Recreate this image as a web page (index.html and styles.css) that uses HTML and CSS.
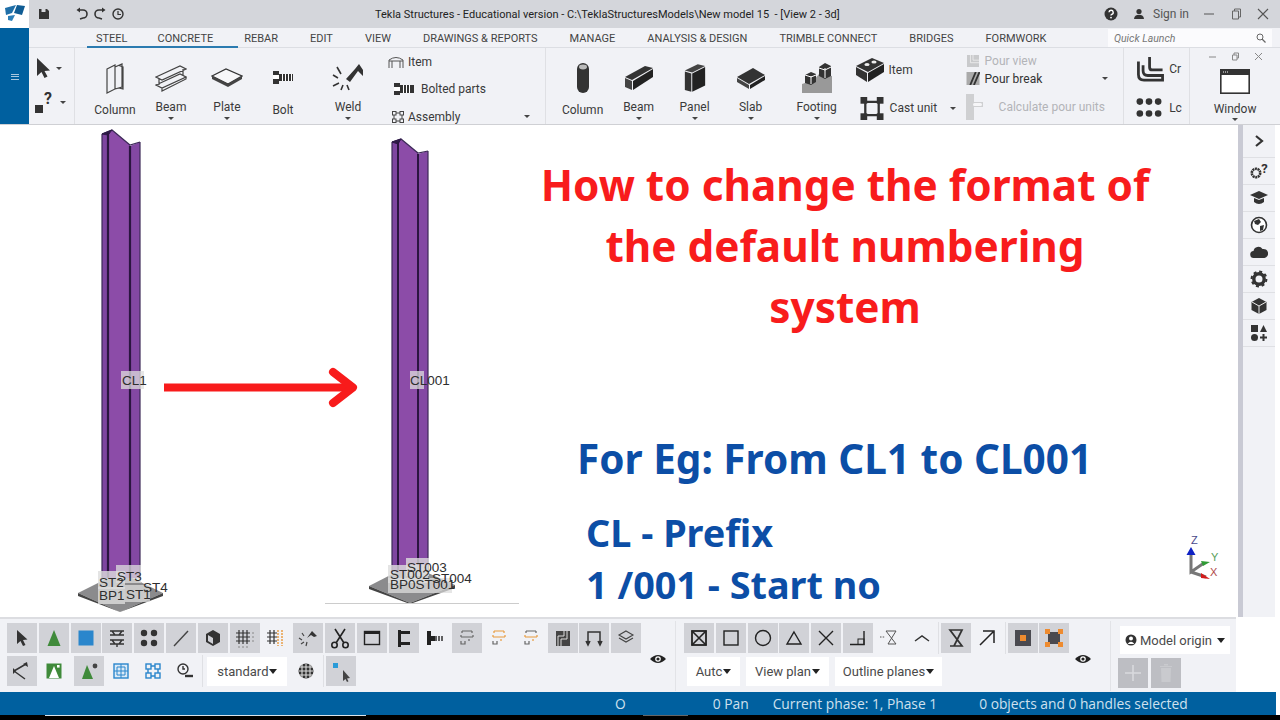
FILE: index.html
```html
<!DOCTYPE html>
<html lang="en">
<head>
<meta charset="utf-8">
<title>Tekla Structures</title>
<link rel="stylesheet" href="styles.css">
</head>
<body>
<div class="app">
  <header class="titlebar">
    <div class="logo"><svg width="29" height="28" viewBox="0 0 29 28"><path d="M5 8 L16 5 L12 13 L6 15Z" fill="#1f6fa8"/><path d="M17 5 L25 6 L22 15 L14 13Z" fill="#0f5c94"/><path d="M8 16 L15 15 L12 21 L8 20Z" fill="#2c7fb8"/></svg></div>
    <div class="quick">
      <svg width="12" height="12" viewBox="0 0 12 12" class="save"><path d="M1 1 H9 L11 3 V11 H1Z" fill="#333"/><rect x="3.5" y="1" width="4" height="3" fill="#d5d7dc"/></svg>
      <svg width="14" height="14" viewBox="0 0 14 14" class="undo"><path d="M3 3 H8 A4 4 0 0 1 8 11 L5 12" fill="none" stroke="#333" stroke-width="1.6"/><path d="M5 0.5 V5.5 L1.5 3Z" fill="#333"/></svg>
      <svg width="14" height="14" viewBox="0 0 14 14"><path d="M11 3 H6 A4 4 0 0 0 6 11 L9 12" fill="none" stroke="#333" stroke-width="1.6"/><path d="M9 0.5 V5.5 L12.5 3Z" fill="#333"/></svg>
      <svg width="14" height="14" viewBox="0 0 14 14"><circle cx="7" cy="7" r="5" fill="none" stroke="#333" stroke-width="1.4"/><path d="M7 4 V7.5 H10" fill="none" stroke="#333" stroke-width="1.2"/></svg>
    </div>
    <div class="doc-title">Tekla Structures - Educational version - C:\TeklaStructuresModels\New model 15&nbsp; - [View 2 - 3d]</div>
    <div class="win">
      <svg width="14" height="14" viewBox="0 0 14 14"><circle cx="7" cy="7" r="6.5" fill="#333"/><path d="M5 5.3 A2.1 2.1 0 1 1 7.6 7.4 Q7 7.7 7 8.6" fill="none" stroke="#fff" stroke-width="1.4"/><circle cx="7" cy="10.6" r="0.9" fill="#fff"/></svg>
      <span class="sign"><svg width="12" height="12" viewBox="0 0 12 12"><circle cx="6" cy="3.5" r="2.6" fill="#333"/><path d="M1 11 Q1.5 6.8 6 6.8 T11 11Z" fill="#333"/></svg>Sign in</span>
      <svg width="12" height="12" viewBox="0 0 12 12"><path d="M1 6 H11" stroke="#555" stroke-width="1"/></svg>
      <svg width="12" height="12" viewBox="0 0 12 12"><path d="M2.5 3 H8.5 V11 H2.5Z M4.5 3 V1 H10.5 V9 H8.5" fill="none" stroke="#666" stroke-width="1"/></svg>
      <svg width="12" height="12" viewBox="0 0 12 12"><path d="M1 1 L11 11 M11 1 L1 11" stroke="#555" stroke-width="1.1"/></svg>
    </div>
  </header>

  <div class="ribbon-wrap">
    <div class="rail"><span class="burger"></span></div>
    <div class="ribbon-main">
      <nav class="tabs">
        <div class="tabs-active"><span>STEEL</span><span>CONCRETE</span></div>
        <div class="tabs-rest"><span>REBAR</span><span>EDIT</span><span>VIEW</span><span>DRAWINGS &amp; REPORTS</span><span>MANAGE</span><span>ANALYSIS &amp; DESIGN</span><span>TRIMBLE CONNECT</span><span>BRIDGES</span><span>FORMWORK</span></div>
        <div class="search"><i>Quick Launch</i><svg width="10" height="10" viewBox="0 0 10 10"><circle cx="4" cy="4" r="3" fill="none" stroke="#666"/><path d="M6 6 L9.5 9.5" stroke="#666" stroke-width="1.2"/></svg></div>
      </nav>
      <div class="ribbon">
        <div class="picker">
          <div class="pick"><svg width="16" height="22" viewBox="0 0 16 22"><path d="M2 1 V19 L6.5 15 L9.5 21 L12.5 19.5 L9.5 14 L15 13.5Z" fill="#333"/></svg><b class="caret"></b></div>
          <div class="pick"><span class="sq"></span><span class="qmark">?</span><b class="caret"></b></div>
        </div>
        <div class="group g-steel">
          <div class="tool w56"><svg width="24" height="34" viewBox="0 0 24 34" fill="none" stroke="#444" stroke-width="1.2"><path d="M4 8 L12 4 V28 L4 32Z M12 6 L19 3 V26 L12 28 M16 4.5 L20 6 V28 L16 27"/></svg><span>Column</span></div>
          <div class="tool w56 drop"><svg width="32" height="30" viewBox="0 0 32 30" fill="none" stroke="#444" stroke-width="1.2"><path d="M1 14 L25 3 L31 6 L7 17Z M4 16 V22 M28 6 V12 M1 22 L25 11 L31 14 L7 25 Z M7 25 V28 L31 16 V14"/></svg><span>Beam</span><b class="caret"></b></div>
          <div class="tool w56 drop"><svg width="32" height="30" viewBox="0 0 32 30"><path d="M1 13 L15 6 L31 13 L17 21Z" fill="#f7f7f9" stroke="#333" stroke-width="1.3"/><path d="M1 13 V16 L17 24 L31 16 V13 L17 21Z" fill="#444"/></svg><span>Plate</span><b class="caret"></b></div>
          <div class="tool w56"><svg width="20" height="34" viewBox="0 0 20 34"><rect x="0" y="10" width="6" height="13" fill="#333"/><rect x="0" y="14" width="6" height="4" fill="#fff"/><path d="M6 13 H20 V20 H6Z" fill="#333"/><path d="M9.5 13 V20 M12.5 13 V20 M15.5 13 V20 M18.5 13 V20" stroke="#fff"/></svg><span>Bolt</span></div>
          <div class="tool w74 drop"><svg width="32" height="32" viewBox="0 0 32 32"><path d="M14 17 L23 7 L27 2 L31 8 V14 L26 9 L18 20Z" fill="#333"/><path d="M1 13 L6 16 M5 5 L9 12 M1 24 L7 21 M9 28 L11 23 M17 28 L15 23" stroke="#333" stroke-width="1.6"/></svg><span>Weld</span><b class="caret"></b></div>
          <div class="stack st-steel">
            <div class="line"><svg width="16" height="14" viewBox="0 0 16 14" fill="none" stroke="#555"><path d="M1 13 V5 Q8 0 15 5 V13 M1 6 H15 M4 6 V13 M12 6 V13"/></svg><span>Item</span></div>
            <div class="line in8"><svg width="20" height="12" viewBox="0 0 20 12"><rect width="6" height="12" fill="#333"/><rect y="4" width="6" height="4" fill="#fff"/><path d="M6 2 H20 V10 H6Z" fill="#333"/><path d="M9.5 2 V10 M12.5 2 V10 M15.5 2 V10" stroke="#fff"/></svg><span>Bolted parts</span></div>
            <div class="line in4"><svg width="12" height="12" viewBox="0 0 12 12" fill="none" stroke="#444"><rect x="0.5" y="0.5" width="3.5" height="3.5"/><rect x="8" y="0.5" width="3.5" height="3.5"/><rect x="0.5" y="8" width="3.5" height="3.5"/><rect x="8" y="8" width="3.5" height="3.5"/><path d="M4 2 H8 M4 10 H8 M2 4 V8 M10 4 V8"/></svg><span>Assembly</span><b class="caret end"></b></div>
          </div>
        </div>
        <div class="group g-concrete">
          <div class="tool w56"><svg width="14" height="32" viewBox="0 0 14 32"><rect x="1" y="1" width="12" height="30" rx="6" fill="#333"/><ellipse cx="7" cy="5" rx="4" ry="2.4" fill="#bbb"/></svg><span>Column</span></div>
          <div class="tool w56 drop"><svg width="32" height="28" viewBox="0 0 32 28"><path d="M2 13 L22 2 L30 4 L9 16Z" fill="#333"/><path d="M2 14 L9 17 V26 L2 23Z" fill="#444"/><path d="M10 17 L30 5 V13 L10 26Z" fill="#222"/></svg><span>Beam</span><b class="caret"></b></div>
          <div class="tool w56 drop"><svg width="24" height="32" viewBox="0 0 26 32"><path d="M2 8 L16 1 L24 3 L10 10Z" fill="#444"/><path d="M2 9 L9 11 V31 L2 29Z" fill="#333"/><path d="M10 11 L24 4 V24 L10 31Z" fill="#222"/></svg><span>Panel</span><b class="caret"></b></div>
          <div class="tool w56 drop"><svg width="32" height="28" viewBox="0 0 32 28"><path d="M2 13 L18 4 L30 11 L14 20Z" fill="#333"/><path d="M2 14 L14 21 V25 L2 18Z" fill="#444"/><path d="M15 21 L30 12 V16 L15 25Z" fill="#222"/></svg><span>Slab</span><b class="caret"></b></div>
          <div class="tool w76 drop"><svg width="32" height="32" viewBox="0 0 32 32"><path d="M1 22 L13 18 L18 12 L31 14 V31 H1Z" fill="#999"/><path d="M4 13 L10 10 L15 12 V20 L10 23 L4 21Z" fill="#333"/><path d="M18 5 L24 1 L30 4 V14 L24 17 L18 14Z" fill="#333"/><path d="M10 14 V22 M24 6 V16 M4 13 L10 15 L15 13 M18 6 L24 8 L30 5" stroke="#fff" fill="none"/></svg><span>Footing</span><b class="caret"></b></div>
          <div class="stack st-cast">
            <div class="line big"><svg width="30" height="26" viewBox="0 0 30 26"><path d="M1 9 L17 1 L29 6 L13 15Z" fill="#333"/><path d="M1 10 L12 16 V25 L1 18Z" fill="#333"/><path d="M13 16 L29 7 V15 L13 25Z" fill="#222"/><ellipse cx="12" cy="7.5" rx="2.6" ry="1.6" fill="#eee"/><ellipse cx="19" cy="5" rx="2.6" ry="1.6" fill="#eee"/></svg><span>Item</span></div>
            <div class="line big cast"><svg width="24" height="23" viewBox="0 0 24 24"><path d="M5 5 H19 V19 H5Z" fill="none" stroke="#333" stroke-width="2.4"/><rect x="0" y="0" width="7" height="7" fill="#333"/><rect x="17" y="0" width="7" height="7" fill="#333"/><rect x="0" y="17" width="7" height="7" fill="#333"/><rect x="17" y="17" width="7" height="7" fill="#333"/></svg><span>Cast unit</span><b class="caret"></b></div>
          </div>
          <div class="stack st-pour">
            <div class="line off"><svg width="14" height="12" viewBox="0 0 14 14"><rect width="14" height="14" fill="#c9cacc"/><path d="M7 0 V6 H14 M4 0 V9 H14" fill="none" stroke="#eee"/></svg><span>Pour view</span></div>
            <div class="line"><svg width="14" height="13" viewBox="0 0 14 14"><rect width="14" height="14" fill="#aaa"/><path d="M4 14 L10 0 M8 14 L14 0" stroke="#333" stroke-width="2"/></svg><span class="pour">Pour break</span><b class="caret end"></b></div>
            <div class="line off big2"><svg width="27" height="26" viewBox="0 0 27 26"><path d="M0 0 H8 V26 H0Z" fill="#cfd0d2"/><path d="M8 8 H17 V13 H8Z" fill="#cfd0d2"/><rect x="7" y="9" width="9" height="3" rx="1.5" fill="#f6f6f8"/></svg><span>Calculate pour units</span></div>
          </div>
        </div>
        <div class="group g-small">
          <div class="mini"><svg width="31" height="26" viewBox="0 0 30 28" fill="none" stroke="#333" stroke-width="3"><path d="M2 6 V20 Q2 26 8 26 H28 V21 H12 Q7 21 7 16 V10"/><path d="M14 1 V12 Q14 15 17 15 H28"/></svg><span>Cr</span></div>
          <div class="mini"><svg width="28" height="22" viewBox="0 0 28 24" fill="#333"><circle cx="4" cy="5" r="3.6"/><circle cx="14" cy="5" r="3.6"/><circle cx="24" cy="5" r="3.6"/><circle cx="4" cy="18" r="3.6"/><circle cx="14" cy="18" r="3.6"/><circle cx="24" cy="18" r="3.6"/></svg><span class="lc">Lc</span></div>
        </div>
        <div class="group g-window">
          <div class="win-mini"><svg width="9" height="9" viewBox="0 0 9 9"><path d="M1 5 H8" stroke="#888"/></svg><svg width="9" height="9" viewBox="0 0 9 9" fill="none" stroke="#888"><path d="M1.5 3 H6 V8 H1.5Z M3 3 V1 H7.5 V6 H6"/></svg><svg width="9" height="9" viewBox="0 0 9 9"><path d="M1 1 L8 8 M8 1 L1 8" stroke="#888"/></svg></div>
          <svg class="w-icon" width="30" height="25" viewBox="0 0 30 25"><rect x="0.8" y="0.8" width="28.4" height="23.4" fill="#fff" stroke="#333" stroke-width="1.6"/><rect x="0" y="0" width="30" height="6" fill="#333"/><path d="M3 3 H9" stroke="#fff" stroke-dasharray="1 1"/></svg>
          <span>Window</span><b class="caret"></b>
        </div>
      </div>
    </div>
  </div>

  <main class="workspace">
    <div class="canvas">
      <svg class="models" width="540" height="492" viewBox="0 125 540 492">
        <path d="M78 593 L120 572 L163 593 L120 612Z" fill="#8b8b8d"/>
        <path d="M78 593 L120 612 L163 593 V596 L120 612 L78 596Z" fill="#444"/>
        <path d="M102 134 L108 133 V578 H102Z" fill="#7e45a0"/>
        <path d="M108 134 L112 130 L130 145 V578 H108Z" fill="#8c4ca8"/>
        <path d="M130 146 L140 142 V578 H130Z" fill="#8348a3"/>
        <path d="M102 134 L112 130 L130 145 L140 142 M102 134 V578 M140 142 V578" fill="none" stroke="#3d2a58" stroke-width="1.2"/>
        <path d="M102 134 L112 130 L108 135Z" fill="#2e1a47" stroke="#2e1a47"/>
        <path d="M108 133 V578 M130 146 V578" stroke="#2b1540" stroke-width="2.2"/>
        <path d="M369 586 L410 565 L455 585 L410 603Z" fill="#8b8b8d"/>
        <path d="M369 586 L410 603 L455 585 V588 L410 604 L369 589Z" fill="#444"/>
        <path d="M392 142 L398 141 V572 H392Z" fill="#7e45a0"/>
        <path d="M398 143 L401 139 L418 153 V572 H398Z" fill="#8c4ca8"/>
        <path d="M418 154 L428 151 V572 H418Z" fill="#8348a3"/>
        <path d="M392 142 L401 139 L418 153 L428 151 M392 142 V572 M428 151 V572" fill="none" stroke="#3d2a58" stroke-width="1.2"/>
        <path d="M392 142 L401 139 L398 144Z" fill="#2e1a47" stroke="#2e1a47"/>
        <path d="M398 142 V572 M418 154 V572" stroke="#2b1540" stroke-width="2"/>
        <path d="M325 603.5 H519" stroke="#ccc"/>
        <rect x="121" y="371" width="23" height="18" fill="#ddd" opacity=".75"/>
        <text x="122" y="385" class="lbl">CL1</text>
        <rect x="410" y="371" width="14" height="18" fill="#ddd" opacity=".75"/>
        <text x="410" y="385" class="lbl">CL001</text>
        <rect x="116" y="565" width="25" height="18" fill="#ddd" opacity=".75"/>
        <rect x="98" y="571" width="27" height="18" fill="#ddd" opacity=".8"/>
        <rect x="98" y="587" width="27" height="17" fill="#ddd" opacity=".8"/>
        <rect x="125" y="585" width="25" height="17" fill="#ddd" opacity=".75"/>
        <text x="117" y="581" class="lbl">ST3</text>
        <text x="99" y="587" class="lbl">ST2</text>
        <text x="143" y="592" class="lbl">ST4</text>
        <text x="99" y="600" class="lbl">BP1</text>
        <text x="126" y="599" class="lbl">ST1</text>
        <rect x="406" y="558" width="23" height="18" fill="#ddd" opacity=".8"/>
        <rect x="388" y="565" width="40" height="18" fill="#ddd" opacity=".8"/>
        <rect x="388" y="578" width="64" height="15" fill="#ddd" opacity=".75"/>
        <text x="407" y="572" class="lbl">ST003</text>
        <text x="390" y="579" class="lbl">ST002</text>
        <text x="432" y="583" class="lbl">ST004</text>
        <text x="390" y="589" class="lbl">BP0ST001</text>
        <path d="M164 387.5 H350" stroke="#f81b1b" stroke-width="8"/>
        <path d="M333 372 L353 387.5 L333 403" fill="none" stroke="#f81b1b" stroke-width="8" stroke-linecap="round" stroke-linejoin="round"/>
      </svg>
      <section class="notes">
        <h1>How to change the format of<br>the default numbering<br>system</h1>
        <h2>For Eg: From CL1 to CL001</h2>
        <p>CL - Prefix</p>
        <p>1 /001 - Start no</p>
      </section>
      <svg class="gizmo" width="40" height="56" viewBox="0 0 40 56"><path d="M9 23 V42 L22 33 M9 42 L24 47" fill="none" stroke="#777" stroke-width="3"/><path d="M9 17 L13.5 25 H4.5Z" fill="#0f22c4"/><path d="M19 31 L28 32 L21 36Z" fill="#2f9b34"/><path d="M19 43 L28 49 L19 48Z" fill="#d31b1b"/><text x="9" y="14" class="az">Z</text><text x="29" y="31" class="ay">Y</text><text x="28" y="46" class="ax">X</text></svg>
    </div>
    <div class="strip"></div>
    <aside class="side">
      <div class="s-row first"><svg width="12" height="14" viewBox="0 0 12 14"><path d="M3 2 L9 7 L3 12" fill="none" stroke="#333" stroke-width="2.2"/></svg></div>
      <div class="s-row"><svg width="12" height="12" viewBox="0 0 12 12" class="gear"><circle cx="6" cy="6" r="4.2" fill="none" stroke="#333" stroke-width="2.6" stroke-dasharray="2 .6"/></svg><span class="s-q">?</span></div>
      <div class="s-row"><svg width="18" height="14" viewBox="0 0 18 14"><path d="M0 4 L9 0 L18 4 L9 8Z" fill="#333"/><path d="M4 7 L9 9 L14 7 V11 Q9 15 4 11Z" fill="#333"/></svg></div>
      <div class="s-row"><svg width="18" height="18" viewBox="0 0 18 18"><circle cx="9" cy="9" r="7.5" fill="#fff" stroke="#333" stroke-width="1.6"/><path d="M4 5 L9 3 L11 6 L8 9 L5 8Z M10 10 L14 9 L13 14 L10 15Z" fill="#333"/></svg></div>
      <div class="s-row"><svg width="18" height="14" viewBox="0 0 18 14"><path d="M4 13 A3.5 3.5 0 0 1 3.5 6 A5 5 0 0 1 12.5 4 A4.5 4.5 0 0 1 14.5 13Z" fill="#333"/></svg></div>
      <div class="s-row"><svg width="18" height="18" viewBox="0 0 18 18"><circle cx="9" cy="9" r="5.2" fill="none" stroke="#333" stroke-width="3.4"/><circle cx="9" cy="9" r="7.4" fill="none" stroke="#333" stroke-width="2" stroke-dasharray="3 2.8"/></svg></div>
      <div class="s-row"><svg width="18" height="18" viewBox="0 0 18 18"><path d="M9 1 L16.5 5 V13 L9 17 L1.5 13 V5Z" fill="#333"/><path d="M2 5 L9 9 L16 5 M9 9 V17" fill="none" stroke="#eee"/></svg></div>
      <div class="s-row"><svg width="18" height="18" viewBox="0 0 18 18" fill="#333"><rect x="1" y="1" width="7" height="7"/><path d="M13.5 1 L17 8 H10Z"/><circle cx="4.5" cy="13.5" r="3.5"/><path d="M12.5 10 H14.5 V12.5 H17 V14.5 H14.5 V17 H12.5 V14.5 H10 V12.5 H12.5Z"/></svg></div>
    </aside>
    <div class="edge"></div>
  </main>

  <div class="toolbar">
    <div class="tb-sec sec-a">
      <div class="tb-row">
        <button class="b g"><svg viewBox="0 0 30 30"><path d="M10 7 V21 L13.5 18 L16 23 L18.5 22 L16 17 L20.5 16.5Z" fill="#333"/></svg></button>
        <button class="b g"><svg viewBox="0 0 30 30"><path d="M15 7 L21.5 23 H8.5Z" fill="#3f8a3a"/></svg></button>
        <button class="b g"><svg viewBox="0 0 30 30"><rect x="7.5" y="7.5" width="15" height="15" fill="#2a86cc"/></svg></button>
        <button class="b g"><svg viewBox="0 0 30 30"><path d="M8 8 H22 M10 8 L13 12 M20 8 L17 12 M8 12 H22 M8 17 H22 M10 17 L13 21 M20 17 L17 21 M8 21 H22 M15 21 V24" stroke="#333" stroke-width="1.4" fill="none"/></svg></button>
        <button class="b g"><svg viewBox="0 0 30 30" fill="#333"><circle cx="10" cy="10" r="3.2"/><circle cx="20" cy="10" r="3.2"/><circle cx="10" cy="20" r="3.2"/><circle cx="20" cy="20" r="3.2"/></svg></button>
        <button class="b g"><svg viewBox="0 0 30 30"><path d="M8 23 L22 8" stroke="#444" stroke-width="1.4"/></svg></button>
        <button class="b g"><svg viewBox="0 0 30 30"><path d="M15 7 L22 11 V19 L15 23 L8 19 V11Z" fill="#333"/><path d="M10 12 L15 15 V21 L10 18Z M15 15 L20 12" fill="#d0d1d6"/></svg></button>
        <button class="b g"><svg viewBox="0 0 30 30"><path d="M9 7 V21 M13 7 V21 M17 7 V21 M6 10 H20 M6 14 H20 M6 18 H20" stroke="#333" stroke-width="1.2"/><path d="M9 23 V25 M13 23 V25 M17 23 V25 M22 10 H24 M22 14 H24 M22 18 H24" stroke="#888"/></svg></button>
        <button class="b"><svg viewBox="0 0 30 30"><path d="M9 7 V21 M13 7 V21 M6 10 H16 M6 14 H16 M6 18 H16" stroke="#333" stroke-width="1.2"/><path d="M17 7 V23 M21 7 V23" stroke="#e89a3c" stroke-width="1.4" stroke-dasharray="2 1"/></svg></button>
        <button class="b g"><svg viewBox="0 0 30 30"><path d="M14 15 L19 8 L24 13 L21 14 L18 12Z" fill="#333"/><path d="M6 15 L9 17 M9 10 L11 13 M8 21 L11 19 M13 23 L14 19" stroke="#444" stroke-width="1.2"/></svg></button>
        <button class="b g"><svg viewBox="0 0 30 30" fill="none" stroke="#222" stroke-width="1.6"><path d="M10 6 L19 20 M20 6 L11 20"/><circle cx="9.5" cy="22" r="2.7"/><circle cx="20.5" cy="22" r="2.7"/></svg></button>
        <button class="b g"><svg viewBox="0 0 30 30"><rect x="7.5" y="8.5" width="15" height="13" fill="none" stroke="#222" stroke-width="1.4"/><rect x="7.5" y="8" width="15" height="3" fill="#222"/></svg></button>
        <button class="b g"><svg viewBox="0 0 30 30" fill="#222"><rect x="9" y="7" width="3" height="17"/><rect x="9" y="8" width="12" height="3"/><rect x="9" y="19" width="12" height="3"/></svg></button>
        <button class="b"><svg viewBox="0 0 30 30"><rect x="7" y="8" width="4" height="14" fill="#222"/><rect x="11" y="13" width="4" height="5" fill="#222"/><path d="M16 13 V18 M19 13 V18 M22 13 V18" stroke="#222" stroke-width="1.4"/></svg></button>
        <button class="b g"><svg viewBox="0 0 30 30" fill="none" stroke="#666" stroke-width="1.2"><path d="M10 8 H20 M10 8 V10 M20 8 V10 M9 14 H21 M9 14 V12 M21 14 V12 M9 18 V21 H13 V18 M17 16 V18"/></svg></button>
        <button class="b"><svg viewBox="0 0 30 30" fill="none" stroke="#e89a3c" stroke-width="1.2"><path d="M10 8 H20 M10 8 V10 M20 8 V10 M9 14 H21 M9 14 V12 M21 14 V12 M17 16 V18"/><path d="M9 18 V21 H13 V18" stroke="#666"/></svg></button>
        <button class="b"><svg viewBox="0 0 30 30" fill="none" stroke="#666" stroke-width="1.2"><path d="M10 8 H20 M10 8 V10 M20 8 V10"/><path d="M9 14 H21 M9 14 V12 M21 14 V12 M17 16 V18" stroke="#e89a3c"/><path d="M9 18 V21 H13 V18"/></svg></button>
        <button class="b g"><svg viewBox="0 0 30 30"><rect x="8" y="8" width="14" height="15" fill="#444"/><path d="M19 8 V16 H13 V23 M16 8 V13 H10 V23" fill="none" stroke="#ddd" stroke-width="1"/></svg></button>
        <button class="b g"><svg viewBox="0 0 30 30" fill="none" stroke="#333" stroke-width="1.5"><path d="M9 21 V9 H21 V21"/><path d="M7 18 L9 22 L11 18 M19 18 L21 22 L23 18" fill="#333"/></svg></button>
        <button class="b g"><svg viewBox="0 0 30 30" fill="none" stroke="#444" stroke-width="1.1"><path d="M15 8 L22 12 L15 16 L8 12Z"/><path d="M8 15 L15 19 L22 15"/></svg></button>
      </div>
      <div class="tb-row">
        <button class="b g"><svg viewBox="0 0 30 30"><path d="M7 15 L19 8 M7 15 L18 23" stroke="#333" stroke-width="1.5" fill="none"/><path d="M16 8 L20 6 L21 11Z M6 12 L9 15 L6 18" fill="#333"/></svg></button>
        <button class="b"><svg viewBox="0 0 30 30"><rect x="7.5" y="7.5" width="15" height="15" fill="#3f8a3a"/><path d="M15 10 L20 22 H10Z" fill="#fff"/><rect x="18" y="9" width="2.6" height="2.6" fill="#fff"/></svg></button>
        <span class="sp4"></span>
        <button class="b g"><svg viewBox="0 0 30 30"><path d="M13 9 L19 23 H8Z" fill="#3f8a3a"/><circle cx="21" cy="10" r="2.4" fill="#444"/></svg></button>
        <button class="b"><svg viewBox="0 0 30 30"><rect x="8" y="8" width="14" height="14" fill="#dbeaf7" stroke="#2a86cc" stroke-width="1.4"/><path d="M8 15 H22 M15 8 V22 M11 11 H19 V19 H11Z" fill="none" stroke="#2a86cc"/></svg></button>
        <button class="b"><svg viewBox="0 0 30 30" fill="none" stroke="#2a86cc" stroke-width="1.4"><rect x="8" y="8" width="5" height="5"/><rect x="17" y="8" width="5" height="5"/><rect x="8" y="17" width="5" height="5"/><rect x="17" y="17" width="5" height="5"/><path d="M13 10 H17 M13 20 H17 M10 13 V17 M20 13 V17"/></svg></button>
        <button class="b"><svg viewBox="0 0 30 30" fill="none" stroke="#333" stroke-width="1.4"><circle cx="13" cy="13" r="5"/><path d="M13 10 V13 H15"/><path d="M15 20 H23" stroke-width="2.4"/></svg></button>
        <span class="vsep"></span>
        <div class="sel std"><span>standard</span><b class="tri"></b></div>
        <button class="b pat"><svg viewBox="0 0 30 30"><circle cx="15" cy="15" r="7.5" fill="#333"/><path d="M8 11 H22 M8 15 H22 M8 19 H22 M11 8 V22 M15 8 V22 M19 8 V22" stroke="#ddd" stroke-width="1.1"/></svg></button>
        <span class="vsep"></span>
        <button class="b g"><svg viewBox="0 0 30 30"><rect x="7" y="7" width="5" height="5" fill="#2a9bd8"/><path d="M17 14 V25 L19.5 23 L21 26 L22.5 25.3 L21 22.5 L24 22Z" fill="#444"/></svg></button>
      </div>
      <svg class="eye" width="16" height="10" viewBox="0 0 16 10"><path d="M0 5 Q8 -3 16 5 Q8 13 0 5Z" fill="#222"/><circle cx="8" cy="5" r="2.8" fill="#fff"/><circle cx="8" cy="5" r="1.6" fill="#222"/></svg>
    </div>
    <div class="tb-sec sec-b">
      <div class="tb-row">
        <button class="b g"><svg viewBox="0 0 30 30"><rect x="8" y="8" width="14" height="14" fill="none" stroke="#222" stroke-width="1.8"/><path d="M8 8 L22 22 M22 8 L8 22" stroke="#222" stroke-width="1.6"/></svg></button>
        <button class="b g"><svg viewBox="0 0 30 30"><rect x="8" y="8" width="14" height="14" fill="none" stroke="#222" stroke-width="1.4"/></svg></button>
        <button class="b g"><svg viewBox="0 0 30 30"><circle cx="15" cy="15" r="7.5" fill="none" stroke="#222" stroke-width="1.4"/></svg></button>
        <button class="b g"><svg viewBox="0 0 30 30"><path d="M15 9 L22 21 H8Z" fill="none" stroke="#222" stroke-width="1.4"/></svg></button>
        <button class="b g"><svg viewBox="0 0 30 30"><path d="M8 8 L22 22 M22 8 L8 22" stroke="#222" stroke-width="1.4"/></svg></button>
        <button class="b g"><svg viewBox="0 0 30 30"><path d="M7 21.5 H21 V8" fill="none" stroke="#222" stroke-width="1.4"/><rect x="15" y="16" width="6" height="5.5" fill="none" stroke="#222"/></svg></button>
        <button class="b"><svg viewBox="0 0 30 30" fill="none" stroke="#555"><path d="M11 8 H21 L13 21 H21 L11 8" stroke-width="1"/><path d="M5 14 H10" stroke-dasharray="1.5 1.2"/></svg></button>
        <button class="b"><svg viewBox="0 0 30 30"><path d="M8 18 L15 13 L22 18" fill="none" stroke="#333" stroke-width="1.5"/></svg></button>
        <span class="vsep tall"></span>
        <button class="b g"><svg viewBox="0 0 30 30"><path d="M9 7 H21 L13 23 H21 L9 7Z M9 7 H21 M9 23 H21" fill="none" stroke="#333" stroke-width="1.7"/></svg></button>
        <button class="b"><svg viewBox="0 0 30 30"><path d="M7 22 L20 9 M10 8 H21 V20" fill="none" stroke="#222" stroke-width="1.5"/></svg></button>
        <span class="vsep tall"></span>
        <button class="b g"><svg viewBox="0 0 30 30"><rect x="7" y="7" width="16" height="16" fill="#4a4a50"/><rect x="12" y="12" width="6" height="6" fill="#ee8b2f"/></svg></button>
        <button class="b g"><svg viewBox="0 0 30 30"><rect x="9" y="9" width="12" height="12" fill="#4a4a50"/><g fill="#ee8b2f"><rect x="6" y="6" width="5" height="5"/><rect x="19" y="6" width="5" height="5"/><rect x="6" y="19" width="5" height="5"/><rect x="19" y="19" width="5" height="5"/></g></svg></button>
      </div>
      <div class="tb-row views">
        <div class="sel auto"><span>Autc</span><b class="tri"></b></div>
        <div class="sel plan"><span>View plan</span><b class="tri"></b></div>
        <div class="sel outline"><span>Outline planes</span><b class="tri"></b></div>
      </div>
      <svg class="eye" width="16" height="10" viewBox="0 0 16 10"><path d="M0 5 Q8 -3 16 5 Q8 13 0 5Z" fill="#222"/><circle cx="8" cy="5" r="2.8" fill="#fff"/><circle cx="8" cy="5" r="1.6" fill="#222"/></svg>
    </div>
    <div class="tb-sec sec-c">
      <div class="sel origin"><svg width="12" height="12" viewBox="0 0 12 12"><circle cx="6" cy="6" r="5.5" fill="#333"/><circle cx="6" cy="4.6" r="2" fill="#fff"/><path d="M2.6 10 Q6 5.5 9.4 10Z" fill="#fff"/></svg><span>Model origin</span><b class="tri"></b></div>
      <div class="tb-row">
        <button class="b dis"><svg viewBox="0 0 30 30"><path d="M15 7 V23 M7 15 H23" stroke="#d9dade" stroke-width="1.6"/></svg></button>
        <button class="b dis"><svg viewBox="0 0 30 30"><path d="M10 10 H20 L19.5 24 H10.5Z M9 8 H21 V9 H9Z M13 6 H17 V7.5 H13Z" fill="#c9cace"/></svg></button>
      </div>
    </div>
  </div>

  <footer class="status">
    <span class="st-o">O</span>
    <span class="st-pan">0 Pan</span>
    <span class="st-phase">Current phase: 1, Phase 1</span>
    <span class="st-sel">0 objects and 0 handles selected</span>
  </footer>
  <div class="player"><span class="played"></span><span class="buffer"></span></div>
</div>
</body>
</html>
```

FILE: styles.css
```css
* { box-sizing: border-box; }
html, body { margin: 0; padding: 0; }
body { width: 1280px; height: 720px; overflow: hidden; background: #fff; font-family: Roboto, "Open Sans", sans-serif; color: #3a3a3a; font-size: 12px; }
.app { display: flex; flex-direction: column; width: 1280px; height: 720px; }
svg { display: block; flex: none; }

/* title bar */
.titlebar { display: flex; align-items: center; height: 28px; background: #d4d6db; flex: none; }
.logo { width: 29px; height: 28px; background: #fff; }
.quick { display: flex; align-items: center; gap: 4px; padding-left: 9px; }
.quick .undo { margin-left: 21px; }
.doc-title { position: absolute; left: 375px; top: 8px; font-size: 11px; color: #222; white-space: nowrap; }
.win { margin-left: auto; display: flex; align-items: center; gap: 15px; padding-right: 11px; }
.sign { display: flex; align-items: center; gap: 8px; color: #555; font-size: 12px; margin-right: -1px; }

/* ribbon */
.ribbon-wrap { display: flex; height: 97px; flex: none; background: #f1f2f6; border-bottom: 1px solid #cfd0d4; }
.rail { width: 29px; background: #00609f; display: flex; align-items: center; justify-content: center; padding-top: 1px; }
.burger { width: 8px; height: 6px; border-top: 1px solid #a9c7de; border-bottom: 1px solid #a9c7de; position: relative; }
.burger::after { content: ""; position: absolute; left: 0; right: 0; top: 1.5px; height: 1px; background: #a9c7de; }
.ribbon-main { flex: 1; display: flex; flex-direction: column; min-width: 0; }
.tabs { display: flex; height: 20px; align-items: stretch; padding-left: 58px; font-size: 11px; color: #444; flex: none; border-bottom: 1px solid #dcdee3; }
.tabs span { white-space: nowrap; line-height: 21px; }
.tabs-active { display: flex; gap: 30px; padding: 0 25px 0 9px; border-bottom: 2px solid #2b7bb0; height: 20px; margin-right: 6px; }
.tabs-rest { display: flex; gap: 32px; }
.search { position: absolute; left: 1108px; top: 29px; width: 164px; height: 18px; background: #fbfbfd; display: flex; align-items: center; justify-content: space-between; padding: 0 6px; color: #777; font-size: 10.5px; }
.ribbon { display: flex; height: 76px; }
.picker { width: 46px; border-right: 1px solid #dfe0e4; display: flex; flex-direction: column; padding: 8px 0 0 6px; gap: 10px; }
.pick { display: flex; align-items: center; gap: 5px; height: 24px; }
.sq { width: 8px; height: 8px; background: #333; align-self: flex-end; margin-bottom: 1px; }
.qmark { font-weight: 700; font-size: 16px; line-height: 16px; color: #333; margin: -6px 0 0 -4px; width: 11px; }
.caret { display: block; width: 0; height: 0; border: 3px solid transparent; border-top: 3px solid #444; border-bottom: 0; flex: none; }
.caret.end { margin-left: auto; }
.group { display: flex; border-right: 1px solid #dfe0e4; height: 76px; }
.g-steel { width: 471px; padding-left: 12px; }
.tool { display: flex; flex-direction: column; align-items: center; height: 76px; padding-top: 13px; white-space: nowrap; }
.tool svg { height: 34px; margin-bottom: 8px; }
.tool.drop svg { margin-bottom: 5px; }
.tool .caret { margin-top: 3px; }
.w56 { width: 56px; } .w74 { width: 74px; } .w76 { width: 76px; }
.stack { display: flex; flex-direction: column; }
.st-steel { width: 148px; height: 76px; overflow: hidden; padding: 0 5px 0 1px; margin-left: 2px; }
.st-steel .line { height: 27.5px; flex: none; }
.line { display: flex; align-items: center; gap: 4px; white-space: nowrap; }
.line.in8 { padding-left: 6px; gap: 7px; }
.line.in4 { padding-left: 4px; gap: 4px; }
.g-concrete { width: 579px; padding-left: 9px; }
.st-cast { width: 104px; gap: 13px; padding-top: 8px; }
.line.big { gap: 4px; height: 27px; }
.line.cast { padding-left: 5px; gap: 6px; height: 24px; }
.line.cast .caret { margin-left: 7px; }
.st-pour { width: 150px; padding: 7px 8px 0 0; margin-left: 7px; }
.st-pour .line { gap: 5px; height: 12px; }
.st-pour .line:nth-child(2) { margin-top: 5px; height: 13px; }
.st-pour .line.big2 { margin-top: 9px; gap: 6px; height: 26px; }
.off { color: #b3b4b8; }
.pour { color: #333; }
.g-small { width: 66px; flex-direction: column; padding: 8px 0 0 11px; gap: 15px; overflow: hidden; }
.mini { display: flex; align-items: center; gap: 3px; }
.mini .lc { margin-left: 3px; }
.g-window { width: 90px; flex-direction: column; align-items: center; border-right: 0; padding-top: 4px; }
.win-mini { display: flex; gap: 14px; height: 10px; }
.w-icon { margin: 7px 0 8px; }
.g-window span { margin-bottom: 2px; }

/* canvas */
.workspace { display: flex; flex: 1; min-height: 0; }
.canvas { width: 1238px; display: flex; position: relative; overflow: hidden; background: #fff; }
.models { width: 540px; }
.lbl { font: 13.5px "Liberation Sans", sans-serif; fill: #2e2e2e; }
.notes { width: 610px; font-family: "Noto Sans", sans-serif; font-weight: 700; padding-top: 29px; white-space: nowrap; }
.notes h1 { margin: 0; color: #f81c1c; font-size: 42.3px; line-height: 61px; text-align: center; font-weight: 700; }
.notes h2 { margin: 97px 0 0 37px; color: #0c4ea6; font-size: 40.5px; line-height: 50px; font-weight: 700; }
.notes p { margin: 0 0 0 46px; color: #0c4ea6; font-size: 37.8px; line-height: 52px; }
.notes h2 + p { margin-top: 23px; }
.gizmo { position: absolute; left: 1182px; top: 405px; }
.az { font: 11px "Liberation Sans", sans-serif; fill: #4a4a8a; }
.ay { font: 11px "Liberation Sans", sans-serif; fill: #5aa05a; }
.ax { font: 11px "Liberation Sans", sans-serif; fill: #b04a4a; }
.strip { width: 5px; background: #c9cad4; }
.side { width: 32px; background: #f1f2f6; display: flex; flex-direction: column; }
.s-row { height: 27px; display: flex; align-items: center; justify-content: center; border-bottom: 1px solid #dfe0e4; flex: none; }
.s-row.first { height: 33px; }
.gear { margin-top: 4px; }
.s-q { font-weight: 700; font-size: 13px; line-height: 13px; color: #333; margin: -5px 0 0 -1px; }
.edge { flex: 1; background: #fff; }

/* bottom toolbar */
.toolbar { display: flex; height: 75px; flex: none; background: #f1f2f6; border-top: 2px solid #dcdde1; padding: 2px 0 0 7px; width: 1236px; }
.tb-sec { position: relative; }
.sec-a { width: 669px; border-right: 1px solid #e2e3e7; padding-top: 2px; height: 70px; }
.sec-b { width: 435px; padding: 2px 0 0 8px; border-right: 1px solid #e2e3e7; height: 70px; }
.sec-c { flex: 1; padding: 5px 0 0 7px; }
.tb-row { display: flex; gap: 1.8px; height: 30px; margin-bottom: 3px; align-items: center; }
.b { width: 30px; height: 30px; padding: 0; margin: 0; border: 0; background: transparent; flex: none; }
.b svg { width: 30px; height: 30px; }
.b.g { background: #d1d2d7; }
.b.dis { background: #bdbec3; }
.sp4 { width: 2px; flex: none; }
.vsep { width: 1px; height: 32px; background: #dfe0e4; flex: none; }
.sel { background: #fff; height: 29px; display: flex; align-items: center; color: #4a4a4a; font-size: 13px; white-space: nowrap; flex: none; justify-content: center; gap: 1px; }
.tri { display: block; width: 0; height: 0; border: 4px solid transparent; border-top: 5px solid #222; border-bottom: 0; flex: none; }
.std { width: 80px; margin-left: 3px; }
.pat { margin-left: 2px; }
.views { gap: 6px; padding-left: 3px; }
.auto { width: 53px; overflow: hidden; } .plan { width: 83px; } .outline { width: 107px; }
.eye { position: absolute; top: 33px; }
.sec-a .eye { left: 643px; }
.sec-b .eye { left: 399px; }
.origin { width: 110px; height: 28px; margin: 0 0 4px 2px; gap: 3px; padding: 0 2px; }
.origin .tri { margin-left: 2px; }
.sec-c .tb-row { gap: 3px; }

/* status */
.status { height: 23px; width: 1276px; flex: none; background: #00609f; color: #cfe0ee; display: flex; align-items: center; font-family: "Open Sans", sans-serif; font-size: 13.8px; position: relative; }
.st-o { margin-left: 615px; }
.st-pan { margin-left: 87px; }
.st-phase { margin-left: 24px; }
.st-sel { margin-left: 42px; }
.player { height: 5px; flex: none; background: #000; display: flex; align-items: flex-start; padding-left: 45px; }
.played { width: 321px; height: 1px; background: #d9e4ec; display: block; }
.buffer { width: 45px; height: 1px; background: #666; display: block; margin-left: 277px; }
```
